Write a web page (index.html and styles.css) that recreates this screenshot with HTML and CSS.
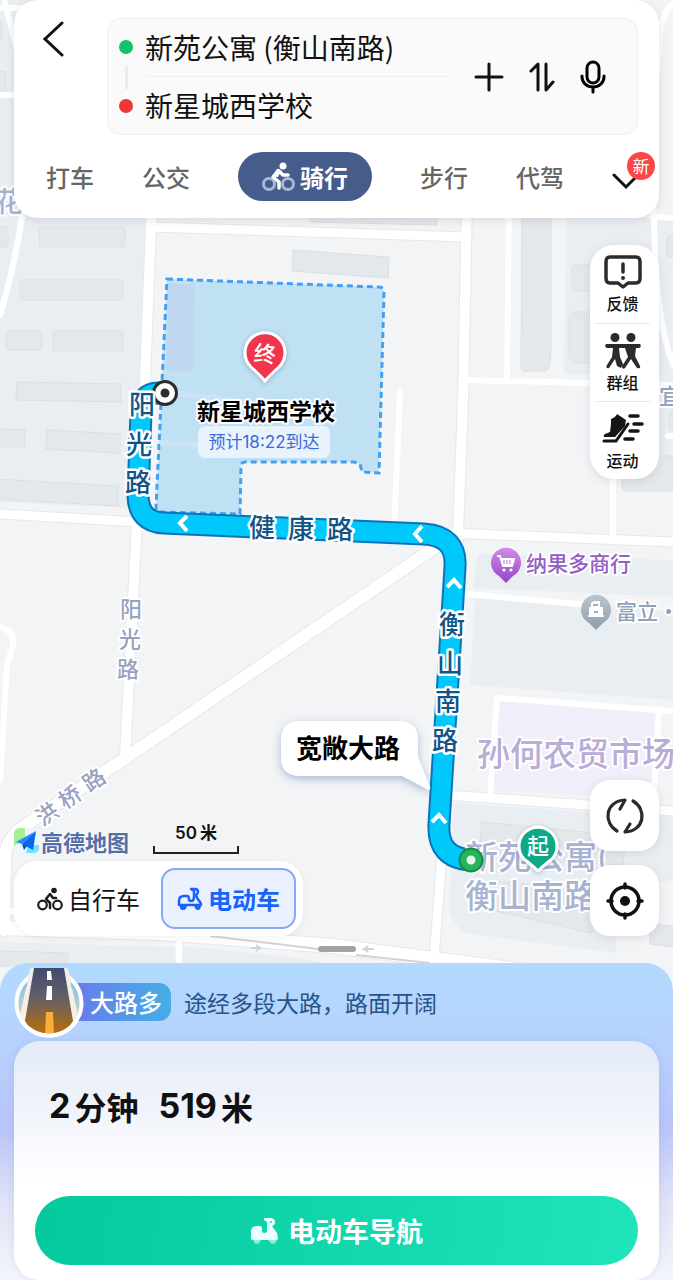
FILE: index.html
```html
<!DOCTYPE html>
<html lang="zh-CN">
<head>
<meta charset="utf-8">
<meta name="viewport" content="width=device-width, initial-scale=1">
<title>骑行路线</title>
<link rel="stylesheet" href="styles.css">
</head>
<body>
<div class="screen">
  <svg class="map" viewBox="0 0 673 1280" preserveAspectRatio="xMidYMin slice" role="img" aria-label="路线地图">
    <defs>
      <linearGradient id="shopPin" x1="0" y1="0" x2="0" y2="1"><stop offset="0" stop-color="#d28be6"/><stop offset="1" stop-color="#9446c8"/></linearGradient>
      <linearGradient id="estatePin" x1="0" y1="0" x2="0" y2="1"><stop offset="0" stop-color="#b9c6d0"/><stop offset="1" stop-color="#8c9dab"/></linearGradient>
      <filter id="soft" x="-20%" y="-30%" width="140%" height="170%"><feDropShadow dx="0" dy="3" stdDeviation="4" flood-color="#4465b0" flood-opacity=".42"/></filter>
      <filter id="pinShadow" x="-30%" y="-30%" width="160%" height="160%"><feDropShadow dx="0" dy="1" stdDeviation="2" flood-color="#35506b" flood-opacity=".4"/></filter>
    </defs>

    <g class="blocks">
      <path d="M0 0H148L143 360 130 508 0 502z"/>
      <path d="M567 218H673V376L564 374z"/>
      <path d="M673 376V456H590V382z"/>
      <path d="M478 554 673 560V597L473 588z"/>
      <path d="M475 598 673 612V700L470 685z"/>
      <path d="M454 803 673 817V880L618 890 616 953 470 934Q458 932 449 912z"/>
      <path d="M0 942 175 947V963H0zM183 946 300 958 340 966H181z"/>
    </g>
    <path class="market" d="M499 701 657 714 652 798 494 791z"/>

    <g class="buildings">
      <rect x="-10" y="226" width="18" height="21" rx="3"/><rect x="39" y="227" width="86" height="20" rx="3"/>
      <rect x="20" y="280" width="103" height="20" rx="3"/><rect x="6" y="331" width="36" height="19" rx="3"/>
      <rect x="53" y="331" width="70" height="20" rx="3"/><path d="M17 382 121 384V402L16 400z"/>
      <path d="M-5 429 25 430V447H-5zM47 430 120 434V453L46 449zM-5 479 118 486V506L-5 499z"/>
      <path d="M293 250 389 257 388 278 292 271z"/><path d="M310 205H437V225L310 222z"/>
      <path d="M522 215H551V345Q551 371 546 371H524Q521 371 521 366z"/>
      <rect x="572" y="265" width="40" height="26" rx="4"/><rect x="569" y="312" width="40" height="51" rx="7"/>
      <rect x="667" y="236" width="20" height="21" rx="3"/><rect x="669" y="411" width="20" height="19" rx="3"/><rect x="622" y="456" width="70" height="35" rx="5"/>
      <rect x="-10" y="20" width="12" height="21" rx="3"/><rect x="-10" y="71" width="16" height="21" rx="3"/>
      <path d="M482 822 626 836 623 865 478 859z"/><path d="M484 881 595 889 592 933 482 908z"/>
      <path d="M650 924 680 927V948L650 944z"/><path d="M0 951 68 953V966H0z"/>
    </g>

    <g class="casing">
      <path class="w10" d="M152 200 145 380 137 521 125 758"/><path class="w9" d="M150 227 467 237"/>
      <path class="w10" d="M467 200 463 400 457 560"/><path class="w9" d="M0 514 140 522M400 531 673 542"/>
      <path class="w12" d="M446 540 127 757 20 829Q7 840 5 855L4 930"/>
      <path class="w9" d="M446 795 673 811M443 840 434 960"/>
      <path class="w14" d="M0 928 160 933 333 946 673 990"/>
    </g>
    <g class="roads">
      <path class="w6" d="M24 200Q19 250 0 315M0 95H14M0 8H30M4 0 20 60"/><path class="w10" d="M152 200 145 380 137 521 125 758"/>
      <path class="w9" d="M150 227 467 237"/><path class="w10" d="M467 200 463 400 457 560"/>
      <path class="w6" d="M509 200 507 380M462 380 673 385M613 470V538M400 392 394 532"/>
      <path class="w6" d="M673 4Q662 12 660 35L652 130 654 225Q657 345 680 376M652 216 680 219M668 436H673"/>
      <path class="w9" d="M0 514 140 522M400 531 673 542"/>
      <path class="w12" d="M446 540 127 757 20 829Q7 840 5 855L4 930"/>
      <path class="w6" d="M0 627Q14 630 13 645L7 665 0 780M465 594 600 606M490 797 497 698 673 711M659 710 653 806"/>
      <path class="w9" d="M446 795 673 811M443 840 434 960"/>
      <path class="w14" d="M0 928 160 933 333 946 673 990"/><path class="w6" d="M179 938V970M10 911H16"/>
    </g>
    <g class="lane"><path d="M210 936 318 949M356 955 430 963"/><path d="M251 948H260L256 945M260 948 256 951M374 949H364L368 946M364 949 368 952"/></g>

    <path class="school" d="M167 279 379 287Q384 287 384 292L379 473 362 472 360 464 354 462H245Q241 462 241 467L240 514 160 512Q156 511 156 507z"/>
    <path class="school-wing" d="M169 284H195L193 371H166z"/>
    <path class="school-path" d="M165 392 245 402M160 443 200 445"/>

    <path class="route-edge" d="M165 393H160Q142 392 141 412L138 496Q139 522 164 523L424 534Q457 536 455 567L439 824Q437 858 471 860"/>
    <path class="route" d="M165 393H160Q142 392 141 412L138 496Q139 522 164 523L424 534Q457 536 455 567L439 824Q437 858 471 860"/>
    <g class="chevrons">
      <path d="M187 516 180 523 187 531M422 526 415 534 422 542M447 587 454 580 461 588M432 822 439 815 446 823"/>
    </g>

    <circle cx="165" cy="393" r="11.5" fill="#fff" stroke="#2a2c2e" stroke-width="3"/><circle cx="165" cy="393" r="4.5" fill="#2a2c2e"/>
    <g class="label area">
      <text x="465" y="869">新苑公寓(</text><text x="465" y="908">衡山南路</text>
    </g>
    <circle cx="471" cy="860" r="11.5" fill="#26b45d" stroke="#138b42" stroke-width="2"/><circle cx="471" cy="860" r="4.5" fill="#e2f8e8"/>
    <g class="label route-name">
      <text x="142" y="414">阳</text><text x="139" y="454">光</text><text x="138" y="492">路</text>
      <text x="262" y="537">健</text><text x="301" y="538">康</text><text x="340" y="539">路</text>
      <text x="452" y="634">衡</text><text x="450" y="673">山</text><text x="448" y="711">南</text><text x="445" y="750">路</text>
    </g>
    <g class="label road-name">
      <text x="131" y="617">阳</text><text x="130" y="647">光</text><text x="128" y="677">路</text>
      <text transform="translate(47 814) rotate(-34)" y="8">洪</text><text transform="translate(70 797) rotate(-34)" y="8">桥</text><text transform="translate(94 780) rotate(-34)" y="8">路</text>
    </g>
    <text class="label corner-name" x="-5" y="212">花</text>
    <text class="label road-name" x="670" y="404">宜</text>
    <text class="label market-name" x="477" y="766">孙何农贸市场</text>
    <text class="label shop-name" x="526" y="571">纳果多商行</text>
    <text class="label estate-name" x="616" y="619">富立·北</text>

    <g class="poi">
      <path fill="url(#shopPin)" d="M506 583Q503 580 499 576A15 15 0 1 1 513 576Q509 580 506 583z"/>
      <path d="M497 556H500L503 566H512L514 559H501" fill="none" stroke="#fff" stroke-width="2"/><path fill="#fff" d="M501 558H514L512 566H503z"/><circle cx="504" cy="570" r="1.6" fill="#fff"/><circle cx="511" cy="570" r="1.6" fill="#fff"/><path d="M504 560V564M507 560V564M510 560V564" stroke="#b969d8"/>
      <path fill="url(#estatePin)" d="M596 630Q593 627 589 623A15 15 0 1 1 603 623Q599 627 596 630z"/>
      <path fill="#fff" d="M591 603 594 601H600V607H603V615H604V617H588V615H589V607H591z"/><path d="M593 605H598M594 612H598" stroke="#9eacb8" stroke-width="2"/>
    </g>

    <g filter="url(#pinShadow)">
      <path class="pin-end" d="M265 381Q260 375 251 367A20 20 0 1 1 279 367Q270 375 265 381z"/>
      <path class="pin-start" d="M538 871Q533 866 524 859A19 19 0 1 1 552 859Q543 866 538 871z"/>
    </g>
    <text class="pin-text" transform="rotate(5 265 354)" x="265" y="362">终</text><text class="pin-text" x="538" y="854">起</text>
    <text class="label school-name" x="266" y="420">新星城西学校</text>
    <rect x="198" y="426" width="132" height="32" rx="7" fill="#e8f3fc"/><text class="eta" x="264" y="448">预计18:22到达</text>

    <path filter="url(#soft)" fill="#fff" d="M300 721H399Q418 721 418 740V757L430 787Q431 791 427 789L402 776H300Q281 776 281 757V740Q281 721 300 721z"/>
    <text class="tip" x="348" y="758">宽敞大路</text>
  </svg>

  <header class="top">
    <div class="search-row">
      <button class="back" aria-label="返回"><svg width="24" height="36" viewBox="0 0 24 36"><path d="M20 2 3 18 20 34" fill="none" stroke="#111" stroke-width="3" stroke-linecap="round"/></svg></button>
      <div class="search">
        <div class="rail"><i class="dot from"></i><i class="link"></i><i class="dot to"></i></div>
        <div class="fields">
          <input type="text" value="新苑公寓 (衡山南路)" aria-label="起点">
          <input type="text" value="新星城西学校" aria-label="终点">
        </div>
        <div class="actions">
          <button aria-label="添加途经点"><svg width="30" height="32" viewBox="0 0 30 32"><path d="M2 16H28M15 3V29" stroke="#111" stroke-width="3" stroke-linecap="round"/></svg></button>
          <button aria-label="交换起终点"><svg width="26" height="32" viewBox="0 0 26 32"><path d="M2 10 9 3V29M17 3V29L24 21" fill="none" stroke="#111" stroke-width="3" stroke-linecap="round" stroke-linejoin="round"/></svg></button>
          <button aria-label="语音输入"><svg width="26" height="36" viewBox="0 0 26 36"><g fill="none" stroke="#000" stroke-width="3" stroke-linecap="round"><rect x="7" y="3" width="12" height="21" rx="6"/><path d="M2 17V18A11 10 0 0 0 24 18V17M13 29V33"/></g></svg></button>
        </div>
      </div>
    </div>
    <nav class="tabs">
      <button>打车</button>
      <button>公交</button>
      <button class="active"><svg width="33" height="30" viewBox="0 0 33 30"><g fill="none" stroke="#a9b8d8" stroke-width="3"><circle cx="7" cy="22" r="5.5"/><circle cx="26" cy="22" r="5.5"/></g><circle cx="21" cy="4" r="3.5" fill="#fff"/><path d="M17 26V20L11 15 17 9 21 13H26" fill="none" stroke="#fff" stroke-width="3.5" stroke-linecap="round" stroke-linejoin="round"/><path d="M10 14 15 7Q17 6 19 9L16 15z" fill="#fff"/></svg>骑行</button>
      <button>步行</button>
      <button>代驾</button>
      <button class="more" aria-label="更多"><svg width="28" height="20" viewBox="0 0 28 20"><path d="M2 4 14 16 26 4" fill="none" stroke="#111" stroke-width="3" stroke-linecap="round"/></svg><span class="new">新</span></button>
    </nav>
  </header>

  <main class="overlay">
    <div class="left">
      <div class="brand-row">
        <div class="brand"><svg width="25" height="26" viewBox="0 0 25 26"><rect width="25" height="26" rx="6" fill="#eef6fb"/><path d="M6 0H11V11L0 18V6Q0 0 6 0z" fill="#a7ee91"/><path d="M14 17H25V20Q25 25 19 25H12z" fill="#70e5f6"/><path d="M22 3 2 14 8 16z" fill="#2389ff"/><path d="M22 3 8 16 19 22z" fill="#0867ed"/><path d="M8 16 10 22 13 18z" fill="#0a4abc"/></svg>高德地图</div>
        <div class="scale"><span>50<b>米</b></span><i></i></div>
      </div>
      <div class="modes">
        <button><svg width="26" height="24" viewBox="0 0 26 24"><g fill="none" stroke="#1c1c1e" stroke-width="2.2" stroke-linecap="round" stroke-linejoin="round"><circle cx="5.5" cy="18" r="4.3"/><circle cx="20.5" cy="18" r="4.3"/><path d="M13 21V16L9 12 13 7 16 11H19" stroke-width="2.5"/></g><circle cx="17" cy="3.5" r="2.8" fill="#1c1c1e"/></svg>自行车</button>
        <button class="on"><svg width="26" height="24" viewBox="0 0 26 24"><path d="M2 18V14Q2 9 7 9H10Q12 9 12 12 12 14 14 14 17 14 17 10V4L14 2H18Q21 2 21 5 21 7 19 8 20 12 23 15 24 16 24 18z" fill="none" stroke="#1764fb" stroke-width="2.5" stroke-linejoin="round"/><path d="M3 18H10Q10 23 6 23T3 18zM17 18H24Q24 23 21 23T17 18z" fill="#1764fb"/></svg>电动车</button>
      </div>
    </div>
    <div class="right">
      <div class="tools">
        <button><svg width="40" height="36" viewBox="0 0 40 36"><path d="M7 3H33Q37 3 37 8V24Q37 29 33 29H25L20 33 15 29H7Q3 29 3 24V8Q3 3 7 3z" fill="none" stroke="#2b2b2b" stroke-width="3.5" stroke-linejoin="round"/><path d="M20 10V18" stroke="#2b2b2b" stroke-width="3.5" stroke-linecap="round"/><circle cx="20" cy="24" r="2" fill="#2b2b2b"/></svg>反馈</button>
        <button><svg width="40" height="36" viewBox="0 0 40 36"><g fill="#2b2b2b"><circle cx="12" cy="4.5" r="4.5"/><circle cx="28" cy="4.500" r="4.5"/><path d="M3 11Q20 11 37 11 39 14 36 15L33 15 32 23 37 33Q38 36 34 35L28 26 22 35Q19 37 19 33L25 24 22 15H16L17 24 20 31 18 35 14 33 12 26 6 35Q2 36 4 32L9 24 10 15 4 15Q1 14 3 11z"/></g></svg>群组</button>
        <button><svg width="42" height="36" viewBox="0 0 42 36"><path d="M9 8Q14 6 15 3L24 9 23 15 13 26H2Q1 24 3 23L8 21 9 13z" fill="#151515"/><g fill="none" stroke="#151515" stroke-linecap="round"><path d="M2 30H14L26 13" stroke-width="3"/><path d="M28 5H36M32 13H40M28 20H36M23 28H31" stroke-width="3.5"/></g></svg>运动</button>
      </div>
      <div class="round-tools">
        <button aria-label="刷新"><svg width="40" height="40" viewBox="0 0 40 40"><g fill="none" stroke="#2a2a2a" stroke-width="3.2" stroke-linecap="round" stroke-linejoin="round"><path d="M12 35C-2 27 0 5 20 4L15 13M28 5C42 13 40 35 20 36L25 28"/></g></svg></button>
        <button aria-label="定位"><svg width="40" height="40" viewBox="0 0 40 40"><circle cx="20" cy="20" r="14" fill="none" stroke="#111" stroke-width="3.5"/><circle cx="20" cy="20" r="5" fill="#111"/><path d="M20 3V7M20 33V37M3 20H7M33 20H37" stroke="#111" stroke-width="3.5" stroke-linecap="round"/></svg></button>
      </div>
    </div>
  </main>

  <section class="sheet">
    <div class="feature">
      <svg class="badge" width="70" height="72" viewBox="0 0 70 72"><defs><linearGradient id="road" x1="0" y1="0" x2="0" y2="1"><stop offset="0" stop-color="#414b70"/><stop offset=".45" stop-color="#625f68"/><stop offset="1" stop-color="#b86c0b"/></linearGradient><linearGradient id="ground" x1="0" y1="0" x2="0" y2="1"><stop offset="0" stop-color="#6bbcf0"/><stop offset=".6" stop-color="#bdd0cc"/><stop offset="1" stop-color="#e8a33c"/></linearGradient><clipPath id="disc"><path d="M13 0H57V20L66 37A31 31 0 0 1 4 37L13 20z"/></clipPath></defs><circle cx="35" cy="37" r="32.5" fill="url(#ground)" stroke="#fff" stroke-width="4"/><g clip-path="url(#disc)"><path d="M16 3 18 2H52L54 3 65 54 50 70H20L5 54z" fill="#f4efe8"/><path d="M20 2H50L59 55 51 67H19L11 55z" fill="url(#road)"/><path d="M33 5H37L38 14H33zM33 20H38V34H32z" fill="#fff"/><path d="M32 46H39L40 69H31z" fill="#f9ae3c"/></g><path d="M7 54A33 33 0 0 0 63 54" fill="none" stroke="#fff" stroke-width="4"/></svg>
      <span class="tag">大路多</span>
      <p>途经多段大路，路面开阔</p>
    </div>
    <div class="card">
      <h1><span>2</span>分钟<span class="distance">519</span>米</h1>
      <button class="go"><svg width="28" height="26" viewBox="0 0 28 26"><path d="M3 19H11Q11 26 7 26T3 19zM18 19H27Q27 26 23 26T18 19z" fill="#8ceed6"/><path d="M1 20V14Q1 8 7 8H10Q12 8 12 12 12 15 14 15 17 15 17 12V4L14 2V0H20Q25 0 25 4 25 7 22 8L27 15 28 20Q28 22 26 22H3Q1 22 1 20z" fill="#ecfdff"/><circle cx="21" cy="4" r="1" fill="#20cba7"/></svg>电动车导航</button>
    </div>
  </section>
</div>
</body>
</html>
```
FILE: styles.css
```css
* { box-sizing: border-box; }
body {
  margin: 0;
  font-family: "Noto Sans CJK SC", "Noto Sans", sans-serif;
  color: #111;
}
button {
  border: 0;
  padding: 0;
  background: none;
  color: inherit;
  font: inherit;
  cursor: pointer;
}
svg { display: block; flex: none; }

.screen {
  position: relative;
  display: flex;
  flex-direction: column;
  min-height: 100vh;
  overflow: hidden;
  background: #f3f4f6;
}

/* Map */
.map { position: absolute; inset: 0; width: 100%; height: 100%; }
.blocks { fill: #e9eef2; }
.market { fill: #f0eef8; }
.buildings { fill: #e4e8eb; stroke: #dcdfe3; stroke-width: 1; }
.roads, .casing { fill: none; stroke-linejoin: round; stroke-linecap: round; }
.roads { stroke: #fff; }
.casing { stroke: #e6e8eb; }
.w6 { stroke-width: 6; }
.w9 { stroke-width: 9; }
.w10 { stroke-width: 10; }
.w12 { stroke-width: 12; }
.w14 { stroke-width: 14; }
.casing .w9 { stroke-width: 11; }
.casing .w10 { stroke-width: 12; }
.casing .w12 { stroke-width: 14; }
.casing .w14 { stroke-width: 16; }
.lane { fill: none; stroke: #d2d3d5; stroke-width: 2; }
.school { fill: #c0e0f4; stroke: #42a0f3; stroke-width: 3; stroke-dasharray: 6 4; }
.school-wing { fill: #bfd8ef; }
.school-path { fill: none; stroke: #cce2f7; stroke-width: 6; }
.route-edge, .route { fill: none; stroke-linejoin: round; }
.route-edge { stroke: #0c73b8; stroke-width: 23; }
.route { stroke: #00c8fa; stroke-width: 19; }
.chevrons { fill: none; stroke: #fff; stroke-width: 4; }
.label { paint-order: stroke; stroke: #fff; stroke-width: 4; stroke-linejoin: round; }
.route-name { font-size: 26px; font-weight: 500; fill: #125488; text-anchor: middle; stroke-width: 5; }
.road-name { font-size: 22px; font-weight: 500; fill: #98a1bf; text-anchor: middle; }
.area { font-size: 33px; font-weight: 500; fill: #a8b3d2; }
.corner-name { font-size: 28px; font-weight: 500; fill: #a8b3d2; }
.market-name { font-size: 33px; fill: #b9add8; font-weight: 500; }
.shop-name { font-size: 21px; fill: #925fc4; font-weight: 500; }
.estate-name { font-size: 21px; fill: #92a0b8; font-weight: 500; }
.school-name { font-size: 23px; font-weight: 700; fill: #000; text-anchor: middle; }
.pin-end { fill: #f0344e; stroke: #fff; stroke-width: 3; }
.pin-start { fill: #08a885; stroke: #fff; stroke-width: 3; }
.pin-text { font-size: 22px; font-weight: 500; fill: #fff; text-anchor: middle; }
.eta { font-family: Inter, "Noto Sans CJK SC", sans-serif; font-size: 17px; fill: #3d68de; text-anchor: middle; }
.tip { font-size: 26px; font-weight: 700; fill: #000; text-anchor: middle; }

/* Search and travel modes */
.top {
  position: relative;
  margin: 0 14px;
  padding: 18px 0 17px;
  border-radius: 24px;
  background: #fff;
  box-shadow: 0 2px 10px rgba(40, 50, 70, .14);
}
.search-row { display: flex; padding-right: 21px; }
.back { width: 93px; padding: 3px 0 0 28px; display: flex; align-items: flex-start; }
.search {
  flex: 1;
  display: flex;
  gap: 12px;
  height: 117px;
  padding: 0 31px 0 11px;
  border: 1px solid #efefef;
  border-radius: 14px;
  background: #fafafa;
}
.rail { display: flex; flex-direction: column; align-items: center; justify-content: space-between; padding: 21px 0; }
.dot { width: 14px; height: 14px; border-radius: 50%; }
.from { background: #12c271; }
.to { background: #ef3535; }
.link { width: 3px; height: 24px; background: #ececee; }
.fields { flex: 1; min-width: 0; display: flex; flex-direction: column; }
.fields input {
  flex: 1;
  width: 100%;
  min-height: 0;
  padding: 0 0 2px;
  border: 0;
  outline: 0;
  background: none;
  color: #111;
  font: 400 28px "Noto Sans CJK SC", sans-serif;
}
.fields input + input { border-top: 1px solid #efefef; }
.actions { display: flex; align-items: center; gap: 25px; padding-left: 11px; }
.tabs {
  display: flex;
  align-items: center;
  justify-content: space-between;
  margin-top: 17px;
  padding: 0 19px 0 32px;
  font-size: 24px;
  font-weight: 500;
  line-height: 49px;
  color: #666;
}
.tabs .active {
  display: flex;
  align-items: center;
  gap: 5px;
  padding: 0 24px;
  border-radius: 25px;
  background: #465d8b;
  color: #fff;
  font-weight: 700;
}
.more { position: relative; padding-top: 8px; }
.new {
  position: absolute;
  top: -11px;
  right: -15px;
  width: 28px;
  height: 28px;
  border-radius: 50%;
  background: #fd4646;
  color: #fff;
  font-size: 17px;
  font-weight: 400;
  line-height: 27px;
}

/* Controls over the map */
.overlay {
  position: relative;
  flex: 1;
  display: flex;
  justify-content: space-between;
  padding: 27px 14px;
}
.left { display: flex; flex-direction: column; justify-content: flex-end; align-items: flex-start; gap: 7px; }
.brand-row { display: flex; align-items: flex-end; gap: 24px; }
.brand {
  display: flex;
  align-items: center;
  gap: 2px;
  color: #5470a9;
  font-size: 22px;
  font-weight: 700;
  line-height: 26px;
  text-shadow: 0 0 2px #fff, 0 0 2px #fff, 0 0 2px #fff;
}
.scale { width: 86px; text-align: center; font: 600 17px/26px Inter, "Noto Sans CJK SC", sans-serif; }
.scale span { display: flex; justify-content: center; gap: 3px; }
.scale b { font-weight: 700; }
.scale i { display: block; height: 8px; border: 2px solid #222; border-top: 0; }
.modes {
  display: flex;
  gap: 12px;
  padding: 7px;
  border-radius: 24px;
  background: #fff;
  box-shadow: 0 2px 8px rgba(40, 50, 70, .06);
  font-size: 24px;
  line-height: 57px;
}
.modes button { display: flex; align-items: center; gap: 5px; padding: 2px 9px 2px 16px; }
.modes .on {
  padding: 0 14px;
  border: 2px solid #85a8f7;
  border-radius: 14px;
  background: #eaf0fd;
  color: #1764fb;
  font-weight: 700;
}
.right { display: flex; flex-direction: column; justify-content: space-between; width: 69px; }
.tools, .round-tools button { background: #fff; box-shadow: 0 2px 10px rgba(40, 50, 70, .12); }
.tools { border-radius: 24px; padding: 0 9px 0 5px; }
.tools button {
  display: flex;
  flex-direction: column;
  align-items: center;
  gap: 2px;
  width: 100%;
  height: 78px;
  padding-top: 9px;
  font-size: 16px;
  font-weight: 500;
  line-height: 22px;
}
.tools button + button { border-top: 1px solid #e8e8e8; }
.round-tools { display: grid; gap: 14px; }
.round-tools button { display: grid; place-items: center; height: 71px; border-radius: 20px; }

/* Route sheet */
.sheet {
  position: relative;
  padding: 0 14px;
  border-radius: 28px 28px 0 0;
  background: linear-gradient(#b1daff 0, #b7d2fd 25%, #bac4fa 52%, #dfe3f6 75%, #f4f5fb 100%);
}
.sheet::before {
  content: "";
  position: absolute;
  top: -17px;
  left: 50%;
  width: 38px;
  height: 6px;
  margin-left: -19px;
  border-radius: 3px;
  background: #a3a3a5;
}
.feature { display: flex; align-items: center; height: 78px; }
.badge { position: relative; z-index: 1; }
.tag {
  margin-left: -10px;
  padding: 0 9px 0 16px;
  border-radius: 0 12px 12px 0;
  background: linear-gradient(90deg, #697bea, #45afe7);
  color: #fff;
  font-size: 24px;
  font-weight: 500;
  line-height: 38px;
}
.feature p { margin: 0 0 0 13px; color: #285487; font-size: 23px; }
.card {
  padding: 41px 21px 15px;
  border-radius: 26px;
  background: linear-gradient(#e4ebf7, #f0f3fb 28%, #fff 58%);
  box-shadow: 0 0 8px rgba(100, 120, 200, .16);
}
.card h1 { display: flex; align-items: center; gap: 4px; margin: 0; padding-left: 14px; font-size: 32px; line-height: 48px; font-weight: 700; }
.card h1 span { font-family: Inter, sans-serif; font-size: 34px; }
.card h1 .distance { margin-left: 16px; }
.go {
  display: flex;
  align-items: center;
  justify-content: center;
  gap: 10px;
  width: 100%;
  height: 69px;
  margin-top: 66px;
  border-radius: 35px;
  background: linear-gradient(100deg, #03c99d, #20e4ba);
  color: #fff;
  font-size: 27px;
  font-weight: 700;
}
```
